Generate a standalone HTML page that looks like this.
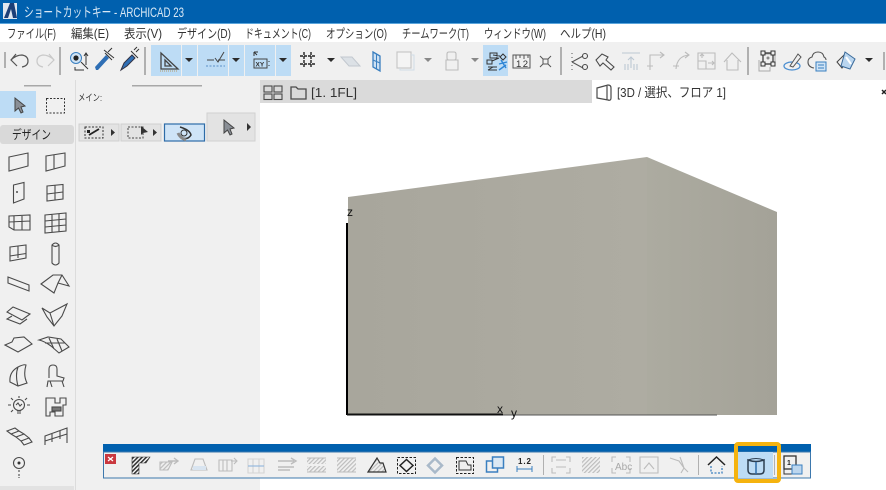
<!DOCTYPE html>
<html lang="ja">
<head>
<meta charset="utf-8">
<title>ショートカットキー - ARCHICAD 23</title>
<style>
html,body{margin:0;padding:0;width:886px;height:490px;overflow:hidden;background:#fff}
svg{display:block;filter:blur(.3px)}
text{font-family:"Liberation Sans","Noto Sans CJK JP",sans-serif;fill:#333}
.d{fill:none;stroke:#4a4a4a;stroke-width:1.1}
.p{fill:none;stroke:#bcbcbc;stroke-width:1.1}
.b{fill:none;stroke:#3a7fc0;stroke-width:1.3}
.k{fill:#2b2b2b}
</style>
</head>
<body>
<svg width="886" height="490" viewBox="0 0 886 490" xmlns="http://www.w3.org/2000/svg">
<defs>
<pattern id="h1" width="3" height="3" patternUnits="userSpaceOnUse" patternTransform="rotate(45)"><rect width="3" height="3" fill="#fff"/><rect width="1.6" height="3" fill="#333"/></pattern>
<pattern id="h2" width="3" height="3" patternUnits="userSpaceOnUse" patternTransform="rotate(45)"><rect width="3" height="3" fill="#f0f0f0"/><rect width="1.2" height="3" fill="#bdbdbd"/></pattern>
<linearGradient id="f1" x1="0" x2="1" y1="0" y2="0"><stop offset="0" stop-color="#a8a69c"/><stop offset="1" stop-color="#aeaca2"/></linearGradient>
<linearGradient id="f2" x1="0" x2="1" y1="0" y2="0"><stop offset="0" stop-color="#acaba0"/><stop offset="1" stop-color="#a4a298"/></linearGradient>
</defs>

<!-- title bar -->
<rect width="886" height="23" fill="#0060ae"/>
<rect y="23" width="886" height="1" fill="#5aa5dc"/>
<rect x="3" y="3" width="14" height="16" fill="#dfe6ef"/>
<path d="M4 18 L10 3 L14 3 L17 18 L13 18 L11 9 L8 18Z" fill="#1c3f78"/>
<text x="24" y="17" font-size="13.5" style="fill:#d9e8f5" textLength="160" lengthAdjust="spacingAndGlyphs">ショートカットキー - ARCHICAD 23</text>

<!-- menu -->
<rect y="24" width="886" height="18" fill="#fff"/>
<g font-size="12.5">
<text x="7" y="38" textLength="49" lengthAdjust="spacingAndGlyphs">ファイル(F)</text>
<text x="71" y="38" textLength="38" lengthAdjust="spacingAndGlyphs">編集(E)</text>
<text x="124" y="38" textLength="38" lengthAdjust="spacingAndGlyphs">表示(V)</text>
<text x="177" y="38" textLength="54" lengthAdjust="spacingAndGlyphs">デザイン(D)</text>
<text x="245" y="38" textLength="66" lengthAdjust="spacingAndGlyphs">ドキュメント(C)</text>
<text x="326" y="38" textLength="61" lengthAdjust="spacingAndGlyphs">オプション(O)</text>
<text x="402" y="38" textLength="67" lengthAdjust="spacingAndGlyphs">チームワーク(T)</text>
<text x="484" y="38" textLength="62" lengthAdjust="spacingAndGlyphs">ウィンドウ(W)</text>
<text x="560" y="38" textLength="46" lengthAdjust="spacingAndGlyphs">ヘルプ(H)</text>
</g>

<!-- toolbar -->
<rect y="42" width="886" height="38" fill="#f0f0f0"/>
<g fill="#bddcf5">
<rect x="151" y="45" width="30" height="31"/><rect x="182" y="45" width="15" height="31"/>
<rect x="198" y="45" width="30" height="31"/><rect x="229" y="45" width="15" height="31"/>
<rect x="245" y="45" width="30" height="31"/><rect x="276" y="45" width="15" height="31"/>
<rect x="483" y="45" width="25" height="31"/>
</g>
<g stroke="#9a9a9a" stroke-width="1.5">
<path d="M5 52V68M60 47V75M145 47V75M561 47V75M748 47V75M884 52V70"/>
</g>
<path d="M16 54L11 60L17 66M11 60Q16 55 22 55Q28 56 28 61Q28 66 22 67" fill="none" stroke="#555" stroke-width="1.2"/>
<path d="M49 54L54 60L48 66M54 60Q49 55 43 55Q37 56 37 61Q37 66 43 67" fill="none" stroke="#c9c9c9" stroke-width="1.2"/>
<circle cx="76" cy="58" r="5.5" fill="#cfe3f5" stroke="#3a7fc0"/><circle cx="76" cy="58" r="2.6" fill="#222"/>
<path d="M86 65V54M84 56L86 53L88 56M75 67V70H84M81 62L88 69" fill="none" stroke="#333" stroke-width="1"/>
<path d="M96 70 L95 67 L106 55 L109 58 L98 70Z" fill="#2f6fb5"/><path d="M105 53 L112 60M108 52L112 48M104 50L114 58" stroke="#333" fill="none"/>
<path d="M121 70 L124 63 L132 55 L135 58 L127 66Z" fill="#2f6fb5" stroke="#334"/><path d="M131 51L138 58M134 50L137 47M136 52L139 49" stroke="#333" fill="none"/>
<path d="M161 53 V69 H178 Z M165 60 V66 H171Z" fill="none" stroke="#444" stroke-width="1.3"/>
<path d="M160 71H178" stroke="#b29a6a" stroke-dasharray="1 1"/>
<path d="M207 60H214M218 60H225M215 58L218 62L224 52" fill="none" stroke="#444"/>
<path d="M206 66H225" stroke="#5a8fc8" stroke-dasharray="2 1.5"/>
<path d="M254 52L257 55M254 52V56M254 52H258" stroke="#333" fill="none"/>
<rect x="254" y="59" width="13" height="9" fill="none" stroke="#444"/>
<text x="255.500" y="66.500" font-size="6.500" font-weight="bold">XY</text>
<path d="M269 61v1M269 65v1" stroke="#333"/>
<g class="k">
<path d="M185 58h8l-4 4z"/><path d="M232 58h8l-4 4z"/><path d="M279 58h8l-4 4z"/><path d="M327 58h8l-4 4z"/><path d="M865 58h8l-4 4z"/>
</g>
<path d="M424 58h8l-4 4zM471 58h8l-4 4z" fill="#888"/>
<path d="M304 52V68M311 52V68M300 56H316M300 64H316" stroke="#222" stroke-width="1.4" stroke-dasharray="3 1"/>
<path d="M341 57H352L360 66H349Z" fill="#dce1e6" stroke="#c2c8cf"/>
<path d="M373 52 L380 56 V71 L373 67Z" fill="#cde0f2" stroke="#3a7fc0" stroke-width="1.3"/><path d="M376.500 54V69M373 60L380 63" stroke="#3a7fc0"/>
<rect x="397" y="52" width="14" height="16" fill="#f4f4f4" stroke="#c4c4c4" stroke-width="1.1"/><path d="M411 55h3v15h-14v-2" fill="none" stroke="#d0dce6"/>
<path d="M449 52h5q2 0 2 2v4q0 2-2 2h-5q-2 0-2-2v-4q0-2 2-2zM446 60h12v10h-12z" class="p"/>
<g fill="none" stroke="#333" stroke-width="1">
<path d="M490 53H497V58H490ZM503 54l3 3-3 3-3-3zM487 60h5v4h-5zM493 55l7 1M492 61l7-3"/>
<path d="M488 67H497M488 70H497M488 70L493 67"/>
</g>
<path d="M499 64l8-2M501 60l5 8M499 70l7-5" stroke="#2f86d6" stroke-width="1.4" fill="none"/>
<path d="M513 55H530V68H513ZM516 55V59M520 55V58M524 55V59M528 55V58" fill="none" stroke="#555"/>
<text x="516" y="67" font-size="9.500" textLength="12">1 2</text>
<path d="M540 56L551 67M551 56L540 67" stroke="#555" stroke-width="1"/><path d="M543 59h5v5h-5z" fill="#f0f0f0" stroke="#555"/>
<path d="M572 53v1M572 57v1M572 61v1M572 65v1M572 69v1M572 62L583 56M572 62L583 68" stroke="#555" fill="none"/><circle cx="585" cy="56" r="2.500" class="d"/><circle cx="585" cy="67" r="2.500" class="d"/>
<path d="M596 60L602 54L608 57L606 60L614 67L611 70L603 63L600 66Z" class="d"/>
<g class="p">
<path d="M622 53H640M631 68V57M628 60L631 57L634 60M625 70V64M628 70V64M634 70V64M637 70V64" stroke="#bcc8d2"/>
<path d="M650 69V55H663M647 66H653M650 66V70M660 52L664 55L660 58"/>
<path d="M676 69Q677 56 689 55M673 66H679M685 52L689 55L685 58"/>
<path d="M698 53H715V69H698ZM698 61H706V69M702 58V55M700 56L702 54L704 56M708 63H714M712 61L714 63L712 65"/>
<path d="M724 62L732 53L741 62M727 60V70H738V60"/>
</g>
<path d="M763 54H775V65M759 60V71H770V67" fill="none" stroke="#aaa"/>
<path d="M763 53H773V64H763Z" fill="none" stroke="#333" stroke-width="1.2"/>
<path d="M761 51h4v4h-4zM771 51h4v4h-4zM761 62h4v4h-4zM771 62h4v4h-4z" fill="#f0f0f0" stroke="#333"/>
<circle cx="768" cy="58" r="1.500" fill="#888"/>
<ellipse cx="792" cy="66" rx="8" ry="4" fill="none" stroke="#4b8ed0" stroke-width="1.3"/>
<path d="M790 66L798 54L801 57L793 67Z" fill="#f0f0f0" stroke="#555"/>
<path d="M814 68Q808 67 808 62Q808 58 812 57Q813 52 818 52Q823 52 824 57Q826 58 826 60" fill="none" stroke="#555" stroke-width="1.1"/>
<rect x="816" y="62" width="10" height="9" fill="#cfe3f5" stroke="#3a7fc0"/><path d="M818 65h6M818 68h6" stroke="#3a7fc0"/>
<path d="M837 62L846 53L849 58L842 68Z" fill="#f0f0f0" stroke="#444"/>
<path d="M845 52L855 59L850 69L841 66Z" fill="#b9d5ef" stroke="#3a6a9a"/><path d="M846 57L851 64" stroke="#fff" stroke-width="2"/>

<!-- left panels -->
<rect y="80" width="260" height="410" fill="#f0f0f0"/>
<rect x="75" y="80" width="1" height="410" fill="#dcdcdc"/>
<rect y="486" width="74" height="4" fill="#e2e2e2"/>
<rect x="24" y="85" width="27" height="1.500" fill="#a8a8a8"/>
<rect x="132" y="85" width="70" height="1.500" fill="#a8a8a8"/>
<rect y="91" width="36" height="27" fill="#bddcf5"/>
<path d="M15 98V111L18.500 108L21 113L23 112L21 107L25 106Z" fill="#8a8f96" stroke="#444"/>
<rect x="46.500" y="98.500" width="18" height="14.500" fill="none" stroke="#333" stroke-dasharray="2 1.500"/>
<rect y="125" width="74" height="19" rx="3" fill="#d9d9d9"/>
<text x="12" y="139" font-size="12.500" textLength="39" lengthAdjust="spacingAndGlyphs" style="fill:#222">デザイン</text>
<text x="78" y="101" font-size="9.500" textLength="24" lengthAdjust="spacingAndGlyphs" style="fill:#333">メイン:</text>

<rect x="79" y="124" width="40" height="17" fill="#e3e3e3" stroke="#cfcfcf"/>
<rect x="121" y="124" width="40" height="17" fill="#e3e3e3" stroke="#cfcfcf"/>
<rect x="164.500" y="124" width="40" height="17" fill="#cfe4f7" stroke="#2d6ca8" stroke-width="1.2"/>
<rect x="207" y="113" width="48" height="28" fill="#e3e3e3" stroke="#d0d0d0"/>
<rect x="85" y="127" width="18" height="11" fill="none" stroke="#333" stroke-dasharray="2 1.500"/>
<path d="M89 135L99 129" stroke="#222" stroke-width="1.800"/><rect x="87" y="130" width="3" height="3" fill="#222"/>
<rect x="128" y="127" width="15" height="11" fill="none" stroke="#444" stroke-dasharray="2 1.500"/>
<path d="M141 126V135L143 133L148 132Z" fill="#333"/>
<path d="M111 129l4 3.500-4 3.500zM153 129l4 3.500-4 3.500zM247 123l4 4-4 4z" fill="#333"/>
<path d="M180 127Q190 130 191 135Q188 140 182 138" fill="none" stroke="#333" stroke-width="1.500"/>
<path d="M178 133Q180 138 186 140" fill="none" stroke="#888" stroke-width="3"/>
<circle cx="184" cy="133" r="3" fill="none" stroke="#333"/>
<path d="M224 120V133L227.500 130L230 135L232 134L230 129L234 128Z" fill="#8a8f96" stroke="#444"/>

<!-- tool palette -->
<g class="d">
<path d="M9 157L28 153V166L9 171Z"/>
<path d="M46 156L65 153V166L46 171Z M54 155V169"/>
<path d="M13.500 185L24 182.500V199L13.500 203Z"/><path d="M16 192h2" stroke-width="1.500"/>
<path d="M47 186L63 184.500V199L47 201Z M55 185V200 M47 194L63 192"/>
<path d="M9 216L30 215V230L14 230L9 227Z M14 216V230 M22 216V230 M9 222L30 221"/>
<path d="M45 215L66 213V231L45 233Z M52 214.500V232 M59 214V231.500 M45 221L66 219 M45 227L66 225"/>
<path d="M10 247L26 245V258L10 261Z M18 246V258 M10 256L26 253.500"/>
<path d="M52 245Q55.500 241 59 245V263Q55.500 267 52 263Z M52 245Q55.500 248 59 245"/>
<path d="M8 277L29 285V291L8 283Z M8 277L8 283"/>
<path d="M41 284L53 275L62 275L69 286L58 283L54 293Z M62 275L58 283"/>
<path d="M7 312L13 307L30 314L22 320Z M12 316L7 319L20 324L27 319"/>
<path d="M42 308L50 313L67 304L62 316L54 326L47 317Z M50 313L54 326"/>
<path d="M5 345L12 342L14 338L24 337L32 344L18 352Z"/>
<path d="M39 340L48 337L61 339L69 347L59 353L51 346Q44 341 39 340Z M49 338L54 349M57 339L62 351M45 343L65 343"/>
<path d="M10 382Q9 372 18 367Q24 364 26 365Q23 375 27 383L18 386Z M18 367Q15 375 18 386"/>
<path d="M49 378V369Q49 365 53 365Q57 365 57 369V376L64 378L63 381H48L47 387M50 381L52 387M62 381L64 387"/>
<circle cx="19" cy="405" r="5.500"/>
<path d="M17 411H21M17 413H21M8 405H11M27 405H30M11 398L13 400M27 398L25 400M11 412L13 410M19 396V398M16 405L18 403L20 406L22 404"/>
<path d="M46 398H55V403H60V398H66V405H63V416H55V412H50V416H46Z"/>
<rect x="52" y="407" width="9" height="4" fill="#777"/>
<path d="M7 431L15 428L19 431L11 434Z M11 434L16 437L24 434L19 431 M16 437L21 441L29 438L24 434 M21 441L24 445L32 442L29 438"/>
<path d="M45 445V436L67 428V443 M45 441L67 434 M52 434V442 M60 431V439"/>
<circle cx="19" cy="463" r="5.500"/>
<path d="M19 470v2M19 474v2M19 477v1"/>
</g>
<circle cx="19" cy="463" r="1.500" fill="#333"/>

<!-- tabs -->
<rect x="260" y="80" width="332" height="23" fill="#dadada"/>
<rect x="592" y="80" width="294" height="23" fill="#fff"/>
<g class="d">
<rect x="264" y="86" width="8" height="6"/><rect x="274" y="86" width="8" height="6"/>
<rect x="264" y="94" width="8" height="5.500"/><rect x="274" y="94" width="8" height="5.500"/>
<path d="M291 99V87H296L298 89H306V99Z" stroke-width="1.300"/>
<path d="M597 88L608 85Q611 85 611 88V98Q611 101 608 100L597 98Z M607 86V100" stroke-width="1.200"/>
</g>
<text x="311" y="97" font-size="13" textLength="46" lengthAdjust="spacingAndGlyphs">[1. 1FL]</text>
<text x="617" y="97" font-size="13" textLength="109" lengthAdjust="spacingAndGlyphs">[3D / 選択、フロア 1]</text>
<path d="M882 90l4 4M886 90l-4 4" stroke="#222" stroke-width="1.500"/>

<!-- 3D box -->
<path d="M348 197L647 157V415H348Z" fill="url(#f1)"/>
<path d="M647 157L777 212V415H647Z" fill="url(#f2)"/>
<path d="M347 223V415" stroke="#000" stroke-width="2"/>
<path d="M347 414.500H503" stroke="#111" stroke-width="2"/>
<path d="M503 415H717" stroke="#555" stroke-width="1"/>
<text x="347" y="216" font-size="12" style="fill:#111">z</text>
<text x="497" y="413" font-size="12" style="fill:#111">x</text>
<text x="511" y="417" font-size="12" style="fill:#111">y</text>

<!-- bottom floating toolbar -->
<rect x="103" y="444" width="708" height="8" fill="#0060ae"/>
<rect x="103.500" y="452" width="707" height="26" fill="#f0f0f0" stroke="#3d78ad"/>
<rect x="105" y="454" width="11" height="10" fill="#c9383f"/>
<path d="M108 457l5 4M113 457l-5 4" stroke="#fff" stroke-width="1.200"/>
<path d="M132 457H150L146 463H139V474H132Z" fill="url(#h1)" stroke="#333" stroke-width=".6"/>
<g class="p">
<path d="M160 462H172L168 470H160Z" fill="url(#h2)"/><path d="M168 461H177M174 458L178 461L174 464" stroke-width="1.400"/>
<path d="M191 470L195 459H203L207 470Z"/><rect x="193" y="466" width="13" height="4" fill="#d8e4f0" stroke="none"/>
<path d="M219 460H232V471H219ZM223 460V471M227 460V471M231 461H236M234 458L237 461L234 464"/>
<path d="M248 459H264V473H248ZM253 459V473M259 459V473" stroke="#d4d4d4"/><path d="M248 466H264" stroke="#8eb4dc"/>
<path d="M278 461H294M291 458L296 461L291 464M278 467H294M278 470H290" stroke-width="1.400"/>
</g>
<rect x="307" y="458" width="19" height="6" fill="url(#h2)"/><rect x="307" y="466" width="19" height="6" fill="url(#h2)"/>
<path d="M307 458H326M307 472H326" class="p"/>
<rect x="337" y="458" width="19" height="14" fill="url(#h2)"/><path d="M337 458H356M337 472H356" class="p"/>
<path d="M368 472L377 458L380 463H383L386 472Z" fill="url(#h2)" stroke="#333" stroke-width="1.200"/>
<rect x="397.500" y="457.500" width="18" height="16" fill="none" stroke="#222" stroke-dasharray="2.500 1.500"/>
<path d="M406.500 459.500L413 465.500L406.500 471.500L400 465.500Z" fill="none" stroke="#222" stroke-width="1.500"/>
<path d="M435 458.500L442 465.500L435 472.500L428 465.500Z" fill="none" stroke="#a9b9c9" stroke-width="2.500"/>
<rect x="456.500" y="457.500" width="17" height="16" fill="none" stroke="#222" stroke-dasharray="2.500 1.500"/>
<path d="M459 461H466L468 465H471V470H459Z" fill="none" stroke="#333"/>
<rect x="486.500" y="461" width="11" height="11" fill="none" stroke="#3a7fc0" stroke-width="1.500"/>
<rect x="492.500" y="457" width="11" height="11" fill="#dbe8f4" stroke="#3a7fc0" stroke-width="1.500"/>
<text x="518" y="464" font-size="8" font-weight="bold" textLength="13" style="fill:#222">1.2</text>
<path d="M517 469H532M517 466V472M532 466V472" stroke="#3a7fc0" fill="none"/>
<path d="M543.500 455V475M698.500 455V475M774.500 455V475" stroke="#b0b0b0"/>
<g class="p">
<path d="M552 462V457H556M566 457H570V462M552 468V473H556M566 473H570V468M556 460H566M556 467H566"/>
<path d="M630 462V457H626M612 462V457H616M612 468V473H616M630 468V473H626"/>
<path d="M640 457H658V473H640ZM644 469L649 463L654 469"/>
<path d="M670 458L679 461L684 468L688 472M680 457L684 468L681 473"/>
</g>
<rect x="582" y="457" width="18" height="16" fill="url(#h2)"/>
<text x="615" y="470" font-size="10" style="fill:#a8a8a8">Abc</text>
<path d="M708 465L716.500 457L725 465" fill="none" stroke="#222" stroke-width="1.500"/>
<path d="M711 466V473H722V466" fill="none" stroke="#3a7fc0" stroke-dasharray="2 1.500" stroke-width="1.300"/>

<rect x="737" y="452" width="36" height="26" fill="#bddcf5"/>
<path d="M748 460Q756 463 764 460V470Q764 474 760 474H752Q748 474 748 470Z" fill="none" stroke="#2d3f52" stroke-width="1.500"/>
<path d="M756 462V474" stroke="#2d6ca8" stroke-width="1.500"/>
<path d="M748 460Q756 457 764 460" fill="none" stroke="#2d3f52" stroke-width="1"/>
<rect x="736" y="444" width="43" height="37" rx="2" fill="none" stroke="#f5b30f" stroke-width="4"/>
<rect x="784" y="456" width="12" height="13" fill="none" stroke="#333" stroke-width="1.300"/>
<text x="787" y="465" font-size="7" font-weight="bold" style="fill:#222">1</text>
<path d="M784 469V474H792" fill="none" stroke="#333"/>
<rect x="792" y="465" width="10" height="9" fill="#bcd6ee" stroke="#3a7fc0"/>
</svg>
</body>
</html>
